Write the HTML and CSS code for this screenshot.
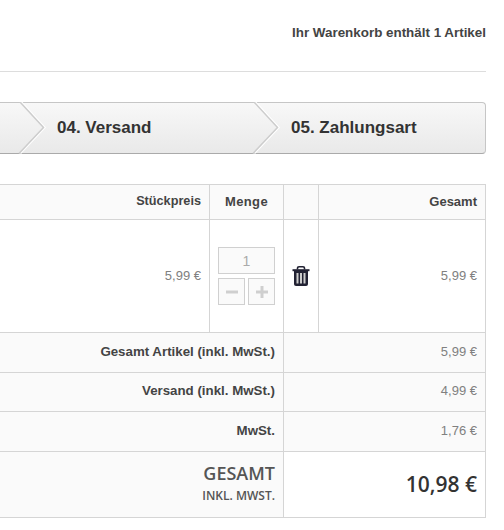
FILE: index.html
```html
<!DOCTYPE html>
<html lang="de">
<head>
    <meta charset="UTF-8">
    <meta name="viewport" content="width=device-width, initial-scale=1.0">
    <title>Warenkorb</title>
    <link rel="stylesheet" href="styles.css">
</head>
<body>
    <div class="page">
        <div class="cart-info">Ihr Warenkorb enthält 1 Artikel</div>

        <div class="steps">
            <div class="step step-prev"></div>
            <div class="step step-shipping">
                <svg class="chevron" width="30" height="52" viewBox="0 0 30 52">
                    <path d="M3.500 0 L27 25.500 L2.500 51.500" fill="none" stroke="#fff" stroke-width="1.500"/>
                    <path d="M2 0 L25.500 25.500 L1 51.500" fill="none" stroke="#cdcdcd" stroke-width="1.500"/>
                </svg>
                <span>04. Versand</span>
            </div>
            <div class="step step-payment">
                <svg class="chevron" width="30" height="52" viewBox="0 0 30 52">
                    <path d="M3.500 0 L27 25.500 L2.500 51.500" fill="none" stroke="#fff" stroke-width="1.500"/>
                    <path d="M2 0 L25.500 25.500 L1 51.500" fill="none" stroke="#cdcdcd" stroke-width="1.500"/>
                </svg>
                <span>05. Zahlungsart</span>
            </div>
        </div>

        <table class="cart-table">
            <colgroup>
                <col class="col-price">
                <col class="col-qty">
                <col class="col-del">
                <col class="col-total">
            </colgroup>
            <thead>
                <tr>
                    <th class="head-price">Stückpreis</th>
                    <th class="center head-qty">Menge</th>
                    <th></th>
                    <th>Gesamt</th>
                </tr>
            </thead>
            <tbody>
                <tr class="item-row">
                    <td class="price">5,99 €</td>
                    <td>
                        <div class="qty">
                            <div class="qty-value">1</div>
                            <div class="qty-btn">
                                <svg width="12" height="12" viewBox="0 0 12 12"><rect x="0" y="4.500" width="12" height="3" fill="#cfcfcf"/></svg>
                            </div>
                            <div class="qty-btn">
                                <svg width="12" height="12" viewBox="0 0 12 12"><path d="M4.500 0 H7.500 V4.500 H12 V7.500 H7.500 V12 H4.500 V7.500 H0 V4.500 H4.500 Z" fill="#cfcfcf"/></svg>
                            </div>
                        </div>
                    </td>
                    <td class="center trash">
                        <svg width="18" height="20" viewBox="0 0 18 20">
                            <path d="M5.500 3.500 V2 Q5.500 0.800 7 0.800 H11 Q12.500 0.800 12.500 2 V3.500" fill="none" stroke="#223" stroke-width="1.600"/>
                            <rect x="0.500" y="3.200" width="17" height="2" fill="#223"/>
                            <path d="M2 5 H16 V18 Q16 20 14 20 H4 Q2 20 2 18 Z" fill="#223"/>
                            <rect x="4.500" y="7" width="2" height="10.500" fill="#ccc"/>
                            <rect x="8" y="7" width="2" height="10.500" fill="#ccc"/>
                            <rect x="11.500" y="7" width="2" height="10.500" fill="#ccc"/>
                        </svg>
                    </td>
                    <td class="price">5,99 €</td>
                </tr>
                <tr class="sum-row sum-a">
                    <th colspan="2">Gesamt Artikel (inkl. MwSt.)</th>
                    <td colspan="2" class="price">5,99 €</td>
                </tr>
                <tr class="sum-row sum-b">
                    <th colspan="2">Versand (inkl. MwSt.)</th>
                    <td colspan="2" class="price">4,99 €</td>
                </tr>
                <tr class="sum-row sum-a">
                    <th colspan="2">MwSt.</th>
                    <td colspan="2" class="price">1,76 €</td>
                </tr>
                <tr class="grand-row">
                    <th colspan="2">
                        <div class="grand-label">GESAMT</div>
                        <div class="grand-sub">INKL. MWST.</div>
                    </th>
                    <td colspan="2" class="grand-total">10,98 €</td>
                </tr>
            </tbody>
        </table>
    </div>
</body>
</html>
```
FILE: styles.css
```css
body {
    margin: 0;
    font-family: "Liberation Sans", Arial, sans-serif;
    background-color: #fff;
    color: #333;
}
.page {
    width: 486px;
}
.cart-info {
    height: 71px;
    line-height: 65px;
    text-align: right;
    font-size: 13.4px;
    font-weight: bold;
    color: #444;
    border-bottom: 1px solid #ddd;
}
.steps {
    display: flex;
    height: 50px;
    margin-top: 30px;
    border: 1px solid #c6c6c6;
    border-bottom-color: #aaa;
    border-left: none;
    border-radius: 0 4px 4px 0;
    background: linear-gradient(to bottom, #f8f8f8, #e9e9e9);
}
.step {
    position: relative;
    display: flex;
    align-items: center;
    font-size: 17px;
    font-weight: bold;
    color: #333;
}
.step-prev {
    width: 18px;
}
.step-shipping {
    width: 234px;
    padding-left: 39px;
    box-sizing: border-box;
}
.step-payment {
    flex: 1;
    padding-left: 39px;
}
.chevron {
    position: absolute;
    left: 0;
    top: -1px;
}
.cart-table {
    width: 486px;
    margin-top: 30px;
    table-layout: fixed;
    border-collapse: separate;
    border-spacing: 0;
    border-top: 1px solid #d5d5d5;
    border-right: 1px solid #d5d5d5;
    font-size: 13px;
}
.col-price { width: 210px; }
.col-qty { width: 74px; }
.col-del { width: 35px; }
.cart-table th, .cart-table td {
    padding: 0 8px;
    text-align: right;
    border-bottom: 1px solid #d5d5d5;
    border-right: 1px solid #d5d5d5;
    box-sizing: border-box;
}
.cart-table tr > :last-child {
    border-right: none;
}
.cart-table th {
    font-weight: bold;
    color: #444;
    font-size: 13.3px;
    background-color: #fafafa;
}
.cart-table thead th {
    height: 35px;
    padding-bottom: 2px;
    font-size: 13px;
}
.cart-table .head-price {
    font-size: 12.7px;
}
.cart-table .head-qty {
    letter-spacing: 0.4px;
}
.cart-table .center {
    text-align: center;
}
.item-row td {
    height: 113px;
}
.cart-table .item-row .price {
    padding-bottom: 2px;
}
.price {
    color: #808080;
}
.cart-table .sum-a th, .sum-a td {
    height: 40px;
    padding-bottom: 3px;
    background-color: #fafafa;
}
.cart-table .sum-b th, .sum-b td {
    height: 39px;
    padding-bottom: 3px;
    background-color: #fafafa;
}
.qty {
    display: grid;
    grid-template-columns: 27px 27px;
    gap: 4px 3px;
    justify-content: center;
    margin: 0 -8px;
}
.qty-value, .qty-btn {
    display: flex;
    align-items: center;
    justify-content: center;
    height: 27px;
    box-sizing: border-box;
    border: 1px solid #d0d0d0;
    background-color: #fafafa;
}
.qty-value {
    grid-column: 1 / 3;
    font-size: 14px;
    color: #aaa;
}
.cart-table .trash {
    padding: 0;
}
.trash svg {
    display: block;
    margin: 0 auto;
}
.cart-table .grand-row th {
    height: 66px;
    padding-bottom: 5px;
    font-family: "Open Sans", sans-serif;
    font-weight: 600;
    color: #555;
}
.grand-label {
    font-size: 18px;
    line-height: 27px;
}
.grand-sub {
    font-size: 12px;
    line-height: 17px;
}
.cart-table .grand-total {
    padding-bottom: 2px;
    font-family: "Open Sans", sans-serif;
    font-size: 21px;
    font-weight: 600;
    color: #333;
}
```
